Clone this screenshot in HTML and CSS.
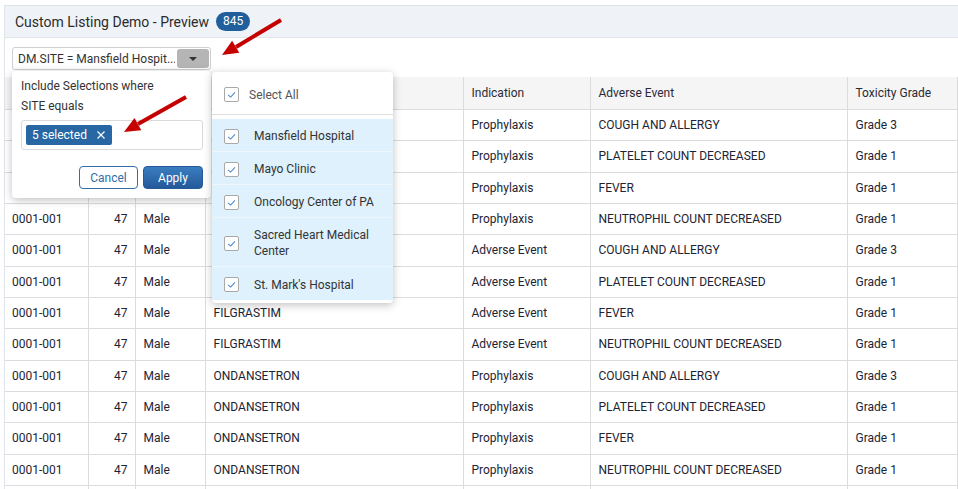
FILE: index.html
```html
<!DOCTYPE html>
<html>
<head>
  <meta charset="UTF-8">
  <title>Custom Listing Demo - Preview</title>
  <link rel="stylesheet" href="styles.css">
</head>
<body>
  <div class="card">
    <div class="card-header">
      <span class="card-title">Custom Listing Demo - Preview</span>
      <span class="count-badge">845</span>
    </div>

    <div class="toolbar">
      <div class="filter-select">
        <span class="filter-text">DM.SITE = Mansfield Hospit...</span>
        <span class="filter-caret"></span>
      </div>
    </div>

    <table class="listing">
      <colgroup>
        <col style="width: 83px">
        <col style="width: 47px">
        <col style="width: 70px">
        <col style="width: 258px">
        <col style="width: 127px">
        <col style="width: 257px">
        <col>
      </colgroup>
      <thead>
        <tr>
          <th>Subject ID</th><th>Age</th><th>Sex</th><th>Medication</th>
          <th>Indication</th><th>Adverse Event</th><th>Toxicity Grade</th>
        </tr>
      </thead>
      <tbody>
        <tr><td>0001-001</td><td class="num">47</td><td>Male</td><td>DEXAMETHASONE</td><td>Prophylaxis</td><td>COUGH AND ALLERGY</td><td>Grade 3</td></tr>
        <tr><td>0001-001</td><td class="num">47</td><td>Male</td><td>DEXAMETHASONE</td><td>Prophylaxis</td><td>PLATELET COUNT DECREASED</td><td>Grade 1</td></tr>
        <tr><td>0001-001</td><td class="num">47</td><td>Male</td><td>DEXAMETHASONE</td><td>Prophylaxis</td><td>FEVER</td><td>Grade 1</td></tr>
        <tr><td>0001-001</td><td class="num">47</td><td>Male</td><td>DEXAMETHASONE</td><td>Prophylaxis</td><td>NEUTROPHIL COUNT DECREASED</td><td>Grade 1</td></tr>
        <tr><td>0001-001</td><td class="num">47</td><td>Male</td><td>FILGRASTIM</td><td>Adverse Event</td><td>COUGH AND ALLERGY</td><td>Grade 3</td></tr>
        <tr><td>0001-001</td><td class="num">47</td><td>Male</td><td>FILGRASTIM</td><td>Adverse Event</td><td>PLATELET COUNT DECREASED</td><td>Grade 1</td></tr>
        <tr><td>0001-001</td><td class="num">47</td><td>Male</td><td>FILGRASTIM</td><td>Adverse Event</td><td>FEVER</td><td>Grade 1</td></tr>
        <tr><td>0001-001</td><td class="num">47</td><td>Male</td><td>FILGRASTIM</td><td>Adverse Event</td><td>NEUTROPHIL COUNT DECREASED</td><td>Grade 1</td></tr>
        <tr><td>0001-001</td><td class="num">47</td><td>Male</td><td>ONDANSETRON</td><td>Prophylaxis</td><td>COUGH AND ALLERGY</td><td>Grade 3</td></tr>
        <tr><td>0001-001</td><td class="num">47</td><td>Male</td><td>ONDANSETRON</td><td>Prophylaxis</td><td>PLATELET COUNT DECREASED</td><td>Grade 1</td></tr>
        <tr><td>0001-001</td><td class="num">47</td><td>Male</td><td>ONDANSETRON</td><td>Prophylaxis</td><td>FEVER</td><td>Grade 1</td></tr>
        <tr><td>0001-001</td><td class="num">47</td><td>Male</td><td>ONDANSETRON</td><td>Prophylaxis</td><td>NEUTROPHIL COUNT DECREASED</td><td>Grade 1</td></tr>
        <tr><td>0001-001</td><td class="num">47</td><td>Male</td><td>PALONOSETRON</td><td>Prophylaxis</td><td>COUGH AND ALLERGY</td><td>Grade 3</td></tr>
      </tbody>
    </table>

    <!-- filter popup -->
    <div class="filter-panel">
      <div class="panel-label">Include Selections where</div>
      <div class="panel-label">SITE equals</div>
      <div class="chip-box">
        <span class="chip">5 selected
          <svg class="chip-x" viewBox="0 0 10 10"><path d="M1.5 1.5 L8.5 8.5 M8.5 1.5 L1.5 8.5" /></svg>
        </span>
      </div>
      <div class="panel-actions">
        <button class="btn btn-cancel">Cancel</button>
        <button class="btn btn-apply">Apply</button>
      </div>
    </div>

    <!-- value list -->
    <div class="value-list">
      <div class="select-all">
        <span class="check"><svg viewBox="0 0 15 15"><polyline points="3.5,8 6.5,10.5 11.5,5" /></svg></span>
        <span>Select All</span>
      </div>
      <div class="options">
        <div class="option"><span class="check"><svg viewBox="0 0 15 15"><polyline points="3.5,8 6.5,10.5 11.5,5" /></svg></span><span>Mansfield Hospital</span></div>
        <div class="option"><span class="check"><svg viewBox="0 0 15 15"><polyline points="3.5,8 6.5,10.5 11.5,5" /></svg></span><span>Mayo Clinic</span></div>
        <div class="option"><span class="check"><svg viewBox="0 0 15 15"><polyline points="3.5,8 6.5,10.5 11.5,5" /></svg></span><span>Oncology Center of PA</span></div>
        <div class="option tall"><span class="check"><svg viewBox="0 0 15 15"><polyline points="3.5,8 6.5,10.5 11.5,5" /></svg></span><span>Sacred Heart Medical Center</span></div>
        <div class="option"><span class="check"><svg viewBox="0 0 15 15"><polyline points="3.5,8 6.5,10.5 11.5,5" /></svg></span><span>St. Mark's Hospital</span></div>
      </div>
    </div>
  </div>

  <!-- annotation arrows -->
  <svg class="arrows" width="958" height="489" viewBox="0 0 958 489">
    <line x1="281" y1="20" x2="236" y2="47" />
    <polygon points="222,55 239.3,52.7 232.1,40.7" />
    <line x1="186" y1="97" x2="138" y2="124" />
    <polygon points="124,132 141.3,130.2 134.5,118" />
  </svg>
</body>
</html>
```

FILE: styles.css
```css
body {
  margin: 0;
  font-family: Roboto, "Liberation Sans", Arial, sans-serif;
  font-size: 12px;
  color: #222;
  overflow: hidden;
  background: #fff;
}

.card {
  position: relative;
  margin: 5px 0 0 4px;
  border: 1px solid #dfe4ea;
  border-right: none;
  border-bottom: none;
}

.card-header {
  height: 31px;
  padding-left: 10px;
  display: flex;
  align-items: center;
  gap: 7px;
  background-color: #eff3f7;
  border-bottom: 1px solid #dfe4ea;
}
.card-title {
  font-size: 14px;
  color: #2b2b2b;
}
.count-badge {
  background-color: #215f9c;
  color: #fff;
  font-size: 12px;
  padding: 2px 7px;
  border-radius: 10px;
  line-height: 15px;
}

.toolbar {
  height: 39px;
  padding: 9px 0 0 7px;
  box-sizing: border-box;
}
.filter-select {
  width: 199px;
  height: 23px;
  box-sizing: border-box;
  border: 1px solid #cfcfcf;
  border-radius: 3px;
  display: flex;
  align-items: center;
  gap: 2px;
  padding: 0 1px 0 5px;
  color: #333;
}
.filter-text {
  flex: 1;
  min-width: 0;
  white-space: nowrap;
  overflow: hidden;
}
.filter-caret {
  flex: none;
  width: 32px;
  height: 19px;
  background-color: #b5b5b5;
  border-radius: 3px;
  position: relative;
}
.filter-caret::after {
  content: "";
  position: absolute;
  left: 12px;
  top: 8px;
  border-left: 4px solid transparent;
  border-right: 4px solid transparent;
  border-top: 4px solid #333;
}

/* 列表 */
.listing {
  width: 100%;
  border-collapse: collapse;
  table-layout: fixed;
}
.listing th,
.listing td {
  border: 1px solid #dcdcdc;
  padding: 0 8px;
  text-align: left;
  white-space: nowrap;
  overflow: hidden;
}
.listing tr:first-child th {
  border-top: none;
}
.listing th:first-child,
.listing td:first-child {
  border-left: none;
  padding-left: 7px;
}
.listing th {
  height: 32px;
  background-color: #f5f5f5;
  font-weight: normal;
  color: #2a2a35;
}
.listing td {
  height: 30.33px;
  color: #1d2433;
}
.listing td.num {
  text-align: right;
  padding-right: 7px;
}

/* 筛选弹层 */
.filter-panel {
  position: absolute;
  left: 7px;
  top: 65px;
  width: 199px;
  box-sizing: border-box;
  padding: 5px 8px 9px 9px;
  background: #fff;
  border-radius: 4px;
  box-shadow: 0 2px 8px rgba(0, 0, 0, 0.25);
  color: #333;
}
.panel-label {
  line-height: 20px;
}
.chip-box {
  margin-top: 4px;
  height: 30px;
  box-sizing: border-box;
  border: 1px solid #dadada;
  border-radius: 3px;
  padding: 4px;
}
.chip {
  display: inline-flex;
  align-items: center;
  gap: 9px;
  height: 20px;
  padding: 0 6px;
  background-color: #2767a4;
  color: #fff;
  border-radius: 2px;
}
.chip-x {
  width: 10px;
  height: 10px;
}
.chip-x path {
  stroke: #fff;
  stroke-width: 1.2;
  fill: none;
}
.panel-actions {
  display: flex;
  justify-content: flex-end;
  gap: 5px;
  margin-top: 16px;
}
.btn {
  height: 23px;
  font-family: inherit;
  font-size: 12px;
  border-radius: 4px;
  cursor: pointer;
}
.btn-cancel {
  width: 59px;
  background: #fff;
  border: 1px solid #2f6ea8;
  color: #2f6ea8;
}
.btn-apply {
  width: 60px;
  background: linear-gradient(#3a7dbf, #24599a);
  border: 1px solid #24599a;
  color: #fff;
}

/* 值列表 */
.value-list {
  position: absolute;
  left: 207px;
  top: 66px;
  width: 181px;
  background: #fff;
  border-radius: 4px;
  box-shadow: 0 2px 8px rgba(0, 0, 0, 0.25);
  padding-bottom: 3px;
  color: #333;
}
.select-all {
  height: 43px;
  box-sizing: border-box;
  padding: 3px 0 0 12px;
  display: flex;
  align-items: center;
  gap: 10px;
  border-bottom: 1px solid #dedede;
  color: #555;
}
.options {
  margin-top: 4px;
}
.option {
  height: 33px;
  box-sizing: border-box;
  display: flex;
  align-items: center;
  gap: 15px;
  padding: 2px 8px 0 12px;
  background-color: #def1fc;
  border-bottom: 1px solid #eef6fb;
  line-height: 16px;
}
.option.tall {
  height: 49px;
}
.option:last-child {
  border-bottom: none;
}
.check {
  flex: none;
  width: 15px;
  height: 15px;
  box-sizing: border-box;
  border: 1px solid #a9a9a9;
  border-radius: 2px;
  background: #fff;
}
.check svg {
  display: block;
  width: 13px;
  height: 13px;
}
.check polyline {
  fill: none;
  stroke: #4a86c8;
  stroke-width: 1.2;
}

/* 标注箭头 */
.arrows {
  position: absolute;
  left: 0;
  top: 0;
  pointer-events: none;
}
.arrows line {
  stroke: #c40000;
  stroke-width: 4;
}
.arrows polygon {
  fill: #c40000;
}
```
